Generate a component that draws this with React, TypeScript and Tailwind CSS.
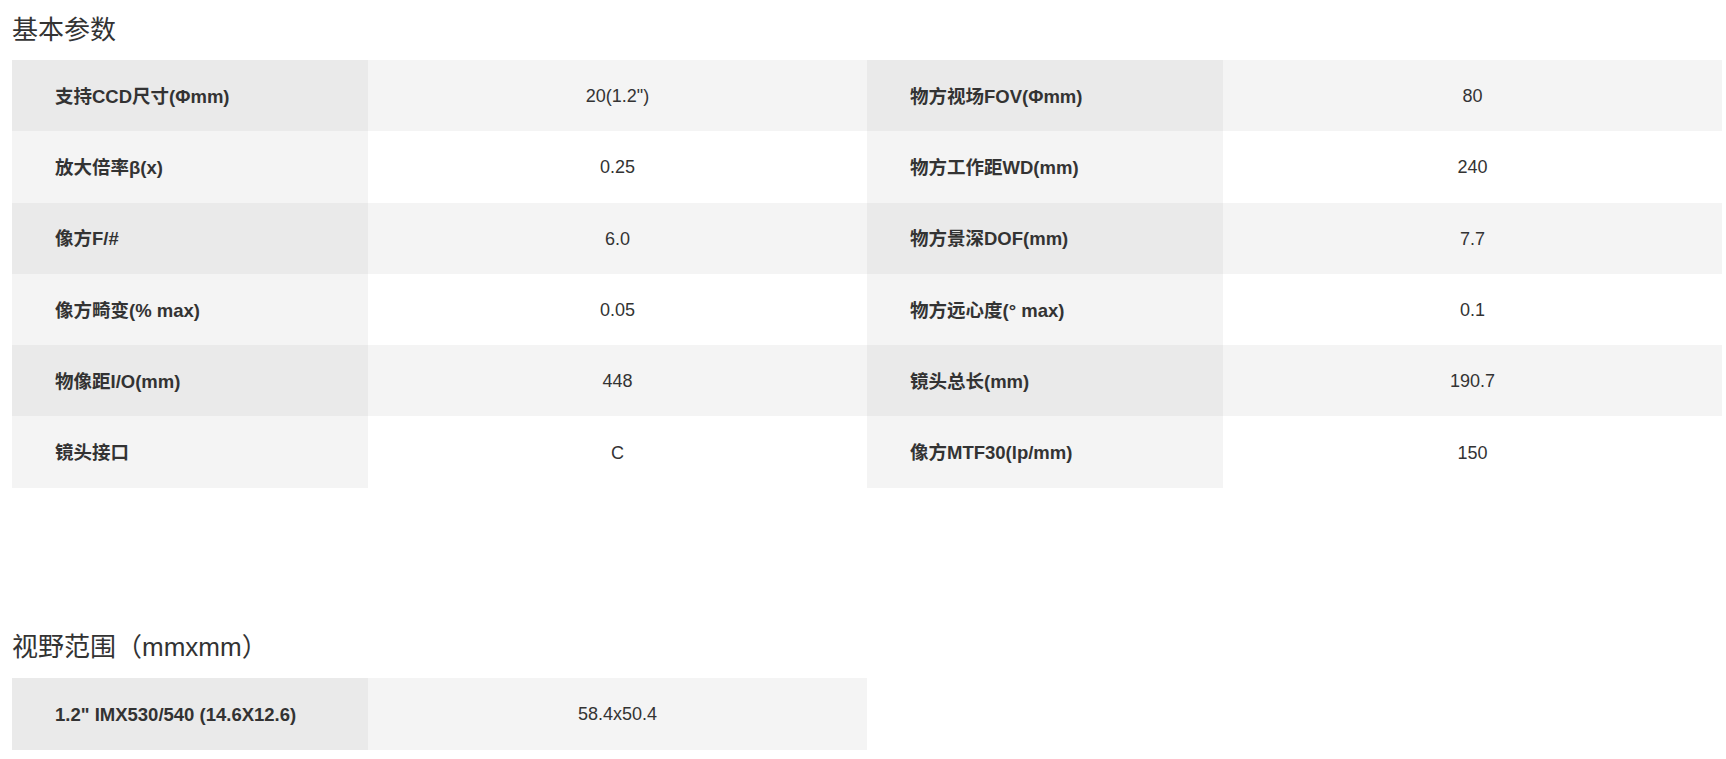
const specs: [string, string, string, string][] = [
  ['支持CCD尺寸(Φmm)', '20(1.2")', '物方视场FOV(Φmm)', '80'],
  ['放大倍率β(x)', '0.25', '物方工作距WD(mm)', '240'],
  ['像方F/#', '6.0', '物方景深DOF(mm)', '7.7'],
  ['像方畸变(% max)', '0.05', '物方远心度(° max)', '0.1'],
  ['物像距I/O(mm)', '448', '镜头总长(mm)', '190.7'],
  ['镜头接口', 'C', '像方MTF30(lp/mm)', '150'],
]

const font = { fontFamily: '"Liberation Sans", Arial, "Noto Sans CJK SC", sans-serif' }

function Title({ text }: { text: string }) {
  return (
    <div className="flex h-[60px] items-center text-[26px] text-[#333]">
      {text}
    </div>
  )
}

function Label({ text, dark }: { text: string; dark: boolean }) {
  return (
    <div
      className={`flex h-full w-[356px] shrink-0 items-center pt-[2px] pl-[43px] text-[18.5px] font-bold text-[#333] ${
        dark ? 'bg-[#eaeaea]' : 'bg-[#f4f4f4]'
      }`}
    >
      {text}
    </div>
  )
}

function Value({ text, dark }: { text: string; dark: boolean }) {
  return (
    <div
      className={`flex h-full w-[499px] shrink-0 items-center justify-center pt-[2px] text-[18px] text-[#333] ${
        dark ? 'bg-[#f4f4f4]' : 'bg-white'
      }`}
    >
      {text}
    </div>
  )
}

export default function App() {
  return (
    <div className="min-h-screen bg-white pl-[12px]" style={font}>
      <Title text="基本参数" />
      <div className="flex flex-col">
        {specs.map((row, i) => {
          const dark = i % 2 === 0
          return (
            <div key={i} className="flex h-[71.3px]">
              <Label text={row[0]} dark={dark} />
              <Value text={row[1]} dark={dark} />
              <Label text={row[2]} dark={dark} />
              <Value text={row[3]} dark={dark} />
            </div>
          )
        })}
      </div>

      <div className="mt-[130px]">
        <Title text="视野范围（mmxmm）" />
        <div className="flex h-[72px]">
          <Label text={'1.2" IMX530/540 (14.6X12.6)'} dark />
          <Value text="58.4x50.4" dark />
        </div>
      </div>
    </div>
  )
}
